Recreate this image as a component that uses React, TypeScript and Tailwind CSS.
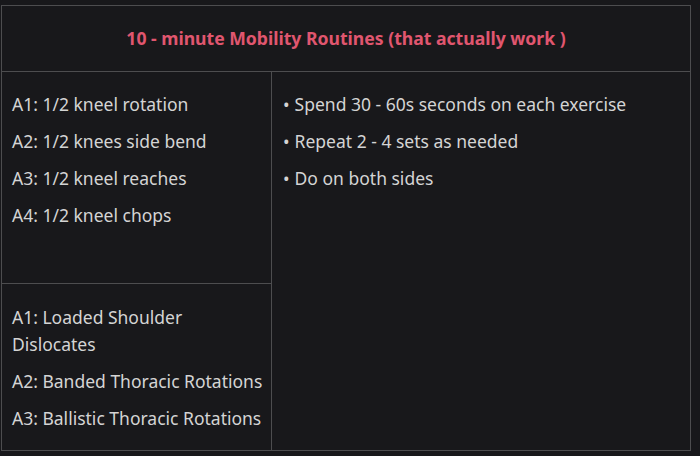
export default function App() {
  const first = ['A1: 1/2 kneel rotation', 'A2: 1/2 knees side bend', 'A3: 1/2 kneel reaches', 'A4: 1/2 kneel chops'];
  const second = ['A2: Banded Thoracic Rotations', 'A3: Ballistic Thoracic Rotations'];
  const notes = ['Spend 30 - 60s seconds on each exercise', 'Repeat 2 - 4 sets as needed', 'Do on both sides'];

  return (
    <div className="w-[700px] h-[456px] overflow-hidden bg-[#18181b] pt-[5px] pl-px font-['Segoe_UI','Noto_Sans',sans-serif] text-[17.5px] leading-[27px] text-[#d4d4d4]">
      <div className="w-[690px] h-[446px] border border-[#4d4d4f] flex flex-col">
        {/* Header */}
        <div className="h-[66px] shrink-0 border-b border-[#4d4d4f] flex items-center justify-center font-bold text-[17.6px] text-[#e0566f]">
          10 - minute Mobility Routines (that actually work )
        </div>

        <div className="flex flex-1">
          {/* Left column */}
          <div className="w-[270px] border-r border-[#4d4d4f] flex flex-col">
            <div className="h-[212px] border-b border-[#4d4d4f] pl-[10px] pt-[19px] flex flex-col gap-[10px]">
              {first.map((t) => (
                <p key={t}>{t}</p>
              ))}
            </div>
            <div className="flex-1 pl-[10px] pt-[20px] flex flex-col gap-[10px] whitespace-nowrap">
              <p>
                A1: Loaded Shoulder
                <br />
                Dislocates
              </p>
              {second.map((t) => (
                <p key={t}>{t}</p>
              ))}
            </div>
          </div>

          {/* Notes */}
          <div className="flex-1 px-[11px] pt-[19px] flex flex-col gap-[10px]">
            {notes.map((t) => (
              <p key={t} className="flex gap-[5px]">
                <span>•</span>
                <span>{t}</span>
              </p>
            ))}
          </div>
        </div>
      </div>
    </div>
  );
}
